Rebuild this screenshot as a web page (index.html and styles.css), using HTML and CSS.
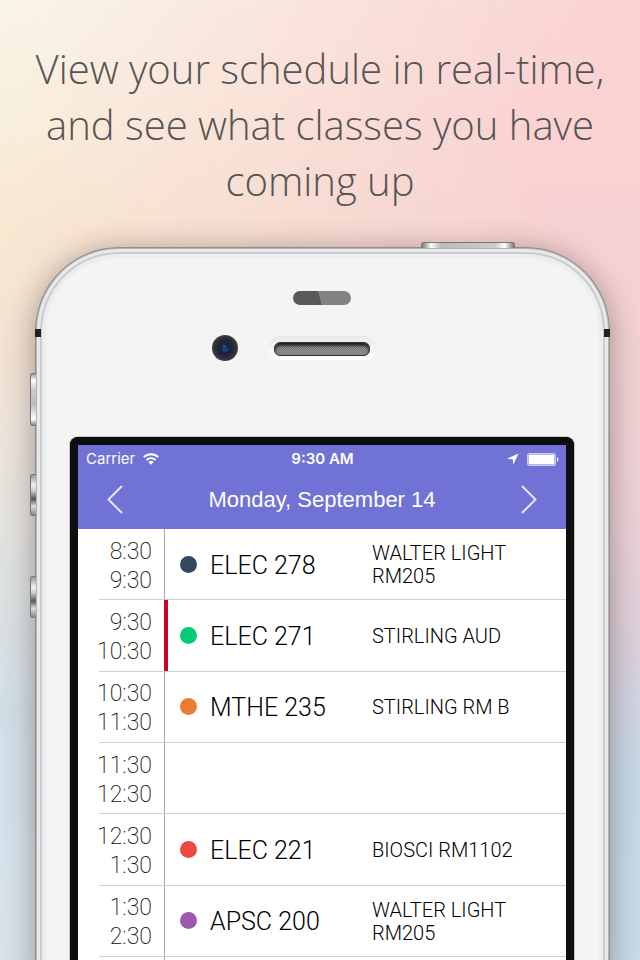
FILE: index.html
```html
<!DOCTYPE html>
<html lang="en">
<head>
<meta charset="utf-8">
<meta name="viewport" content="width=device-width, initial-scale=1">
<title>Class schedule</title>
<link rel="stylesheet" href="styles.css">
</head>
<body>
<main class="page">
  <h1 class="headline">View your schedule in real-time, and see what classes you have coming up</h1>
  <section class="phone">
    <span class="key key-power"></span>
    <span class="key key-mute"></span>
    <span class="key key-up"></span>
    <span class="key key-down"></span>
    <div class="bezel">
      <span class="sensor"></span>
      <div class="earpiece">
        <svg class="camera" viewBox="0 0 26 26" aria-hidden="true">
          <defs>
            <radialGradient id="lens"><stop offset="0" stop-color="#1c3f77"/><stop offset=".35" stop-color="#16264a"/><stop offset=".6" stop-color="#23272f"/><stop offset="1" stop-color="#3b3d42"/></radialGradient>
          </defs>
          <circle cx="13" cy="13" r="13" fill="url(#lens)"/>
          <circle cx="13" cy="13" r="6" fill="#14254b"/>
          <circle cx="13" cy="14" r="3" fill="#1c3c70"/>
          <circle cx="12" cy="11" r="1" fill="#4d6a96"/>
        </svg>
        <span class="speaker"></span>
      </div>
    </div>
    <div class="screen">
      <header class="top">
        <div class="status">
          <div class="carrier">Carrier
            <svg width="16" height="12" viewBox="0 0 16 12" aria-hidden="true"><g fill="none" stroke="#fff" stroke-width="1.8"><path d="M.8 4.2a10.3 10.3 0 0 1 14.4 0"/><path d="M3.4 7a6.6 6.6 0 0 1 9.2 0"/></g><path d="M5.4 9a3.8 3.8 0 0 1 5.2 0L8 11.8z" fill="#fff"/></svg>
          </div>
          <div class="clock">9:30 AM</div>
          <div class="indicators">
            <svg width="12" height="12" viewBox="0 0 12 12" aria-hidden="true"><path d="M11.6.4 0 5.8l5.8.5.4 5.5z" fill="#fff"/></svg>
            <svg width="32" height="13" viewBox="0 0 32 13" aria-hidden="true"><rect x=".5" y=".5" width="28" height="12" rx="1.5" fill="none" stroke="#c9c9f2"/><rect x="1.5" y="1.5" width="26" height="10" rx=".5" fill="#fff"/><path d="M30 4.2c1.8.6 1.8 4 0 4.6z" fill="#fff"/></svg>
          </div>
        </div>
        <nav class="day">
          <button type="button" aria-label="Previous day"><svg width="16" height="29" viewBox="0 0 16 29"><path d="M15 1 1.5 14.5 15 28"/></svg></button>
          <h2>Monday, September 14</h2>
          <button type="button" aria-label="Next day"><svg width="16" height="29" viewBox="0 0 16 29"><path d="M1 1 14.5 14.5 1 28"/></svg></button>
        </nav>
      </header>
      <ol class="schedule">
        <li><div class="time"><time>8:30</time><time>9:30</time></div><div class="class navy"><b>ELEC 278</b><span>WALTER LIGHT RM205</span></div></li>
        <li class="now"><div class="time"><time>9:30</time><time>10:30</time></div><div class="class green"><b>ELEC 271</b><span>STIRLING AUD</span></div></li>
        <li><div class="time"><time>10:30</time><time>11:30</time></div><div class="class orange"><b>MTHE 235</b><span>STIRLING RM B</span></div></li>
        <li><div class="time"><time>11:30</time><time>12:30</time></div><div class="free"></div></li>
        <li><div class="time"><time>12:30</time><time>1:30</time></div><div class="class red"><b>ELEC 221</b><span>BIOSCI RM1102</span></div></li>
        <li><div class="time"><time>1:30</time><time>2:30</time></div><div class="class purple"><b>APSC 200</b><span>WALTER LIGHT RM205</span></div></li>
      </ol>
    </div>
  </section>
</main>
</body>
</html>
```
FILE: styles.css
```css
* { box-sizing: border-box; }

body { margin: 0; }

.page {
  position: relative;
  z-index: 0;
  display: flex;
  flex-direction: column;
  min-height: 100vh;
  padding: 41px 30px 0 35px;
  overflow: hidden;
  background: linear-gradient(#fad5d4 0%, #fbd2d2 12%, #f5d2d2 30%, #edd2d6 52%, #dfd0da 65%, #d3d4e1 72%, #c6d8e6 80%, #c9dce9 100%);
}

.page::before {
  content: "";
  position: absolute;
  inset: 0;
  z-index: -1;
  background: linear-gradient(#f9f5e8 0%, #f8f0dd 12%, #f7e8d0 25%, #f1e4d4 38%, #e6e6dc 49%, #dbe5e2 60%, #d2e1e8 74%, #dce5ec 90%, #e0e5ec 100%);
  -webkit-mask-image: linear-gradient(100deg, #000 0%, transparent 72%);
  mask-image: linear-gradient(100deg, #000 0%, transparent 72%);
}

.headline {
  margin: 0 -5px 38px -10px;
  color: #555;
  font: 300 40px/56px "Open Sans", sans-serif;
  text-align: center;
}

/* runs past the bottom edge of the page */
.phone {
  position: relative;
  display: flex;
  flex: 1;
  flex-direction: column;
  margin-bottom: -20px;
  padding: 0 36px 0 35px;
  border-radius: 84px 84px 0 0;
  background: #f4f4f4;
  box-shadow:
    inset 0 0 0 1px #909090,
    inset 0 0 0 2px #b4b4b4,
    inset 0 0 0 5px #e9e9ea,
    inset 0 0 0 7px #c9cbcd,
    inset 0 0 0 10px #ececee,
    inset 0 0 0 12px #f0f0f1,
    0 4px 30px rgba(70, 50, 50, .45);
}

/* antenna bands */
.phone::before,
.phone::after {
  content: "";
  position: absolute;
  top: 82px;
  left: 0;
  width: 6px;
  height: 8px;
  background: #222;
}

.phone::after { right: 0; left: auto; }

.key {
  position: absolute;
  left: -5px;
  width: 6px;
  height: 42px;
  border: 1px solid #777;
  border-right: 0;
  border-radius: 3px 0 0 3px;
  background: linear-gradient(#999, #eee 25%, #ccc 40%, #555 60%, #ddd 78%, #888);
}

.key-mute {
  top: 126px;
  height: 53px;
  background: linear-gradient(#999, #fff 12%, #ccc 30%, #bbb 60%, #fff 88%, #888);
}

.key-up { top: 227px; }
.key-down { top: 329px; }

.key-power {
  top: -5px;
  right: 95px;
  left: auto;
  width: 94px;
  height: 6px;
  border: 1px solid #777;
  border-bottom: 0;
  border-radius: 3px 3px 0 0;
  background: linear-gradient(90deg, #777, #fff 10%, #bbb 20%, #ccc 80%, #fff 90%, #777);
}

.bezel {
  display: flex;
  flex-direction: column;
  align-items: center;
  gap: 31px;
  height: 190px;
  padding-top: 44px;
}

.sensor {
  width: 58px;
  height: 14px;
  border-radius: 7px;
  background: linear-gradient(75deg, #5a5a5a 46%, #808382 47%);
}

.earpiece { position: relative; }

.camera {
  position: absolute;
  top: -1px;
  left: -56px;
  width: 26px;
  height: 26px;
}

.speaker {
  display: block;
  width: 108px;
  height: 24px;
  padding: 6px;
  border-radius: 12px;
  background: linear-gradient(#e9e9e9, #f3f3f3 50%, #fff);
}

.speaker::before {
  content: "";
  display: block;
  height: 12px;
  border: 1px solid #333;
  border-radius: 6px;
  background: repeating-conic-gradient(#757575 0 25%, #979797 0 50%) 0 0 / 2px 2px;
  box-shadow: inset 0 3px 3px #222;
}

.screen {
  display: flex;
  flex: 1;
  flex-direction: column;
  border: 8px solid #0e0e0e;
  border-bottom: 0;
  border-radius: 8px 8px 0 0;
  background: #fff;
  box-shadow: 0 0 0 1px #c8c8c8;
}

.top {
  height: 84px;
  background: #7072d5;
  color: #fff;
}

.status {
  display: grid;
  grid-template-columns: 1fr auto 1fr;
  align-items: center;
  height: 28px;
  padding: 0 7px 0 8px;
  font: 400 15px/28px Inter, sans-serif;
}

.carrier,
.indicators {
  display: flex;
  align-items: center;
  gap: 8px;
}

.indicators { justify-content: flex-end; }
.clock { font-weight: 600; }

.day {
  display: flex;
  align-items: center;
  justify-content: space-between;
  height: 52px;
  padding: 0 20px;
}

.day h2 {
  margin: 0;
  padding-top: 2px;
  font: 400 22px/50px "Liberation Sans", sans-serif;
}

.day button {
  display: flex;
  padding: 8px 9px;
  border: 0;
  background: none;
}

.day path {
  fill: none;
  stroke: #e6e6fa;
  stroke-width: 2;
}

.schedule {
  display: grid;
  flex: 1;
  grid-auto-rows: 1fr;
  margin: 0;
  padding: 0 0 23px;
  list-style: none;
  background: linear-gradient(#a5a5aa, #a5a5aa) 86px 0 / 1px 100% no-repeat;
}

.schedule li {
  display: grid;
  grid-template-columns: 66px 1fr;
  margin-left: 21px;
  border-bottom: 1px solid #d0d0d0;
}

.time {
  display: flex;
  flex-direction: column;
  align-items: flex-end;
  justify-content: center;
  margin-left: -10px;
  padding: 3px 13px 0 0;
  color: #111;
  font: 200 23px/29px Roboto, sans-serif;
}

.class {
  display: grid;
  grid-template-columns: 17px 149px 1fr;
  align-items: center;
  column-gap: 13px;
  padding-left: 15px;
  color: #000;
  font: 300 20px/23px Roboto, sans-serif;
}

.class::before {
  content: "";
  width: 17px;
  height: 17px;
  border-radius: 50%;
  background: var(--dot);
}

.class b {
  padding-top: 3px;
  font: 300 25px/30px Roboto, sans-serif;
}

.class span {
  max-width: 160px;
  padding-top: 2px;
}

.now .class {
  margin-left: -1px;
  padding-left: 12px;
  border-left: 4px solid #cc0029;
}

.navy { --dot: #34495e; }
.green { --dot: #05ca76; }
.orange { --dot: #e97d36; }
.red { --dot: #ec4a43; }
.purple { --dot: #9c59ae; }
```
